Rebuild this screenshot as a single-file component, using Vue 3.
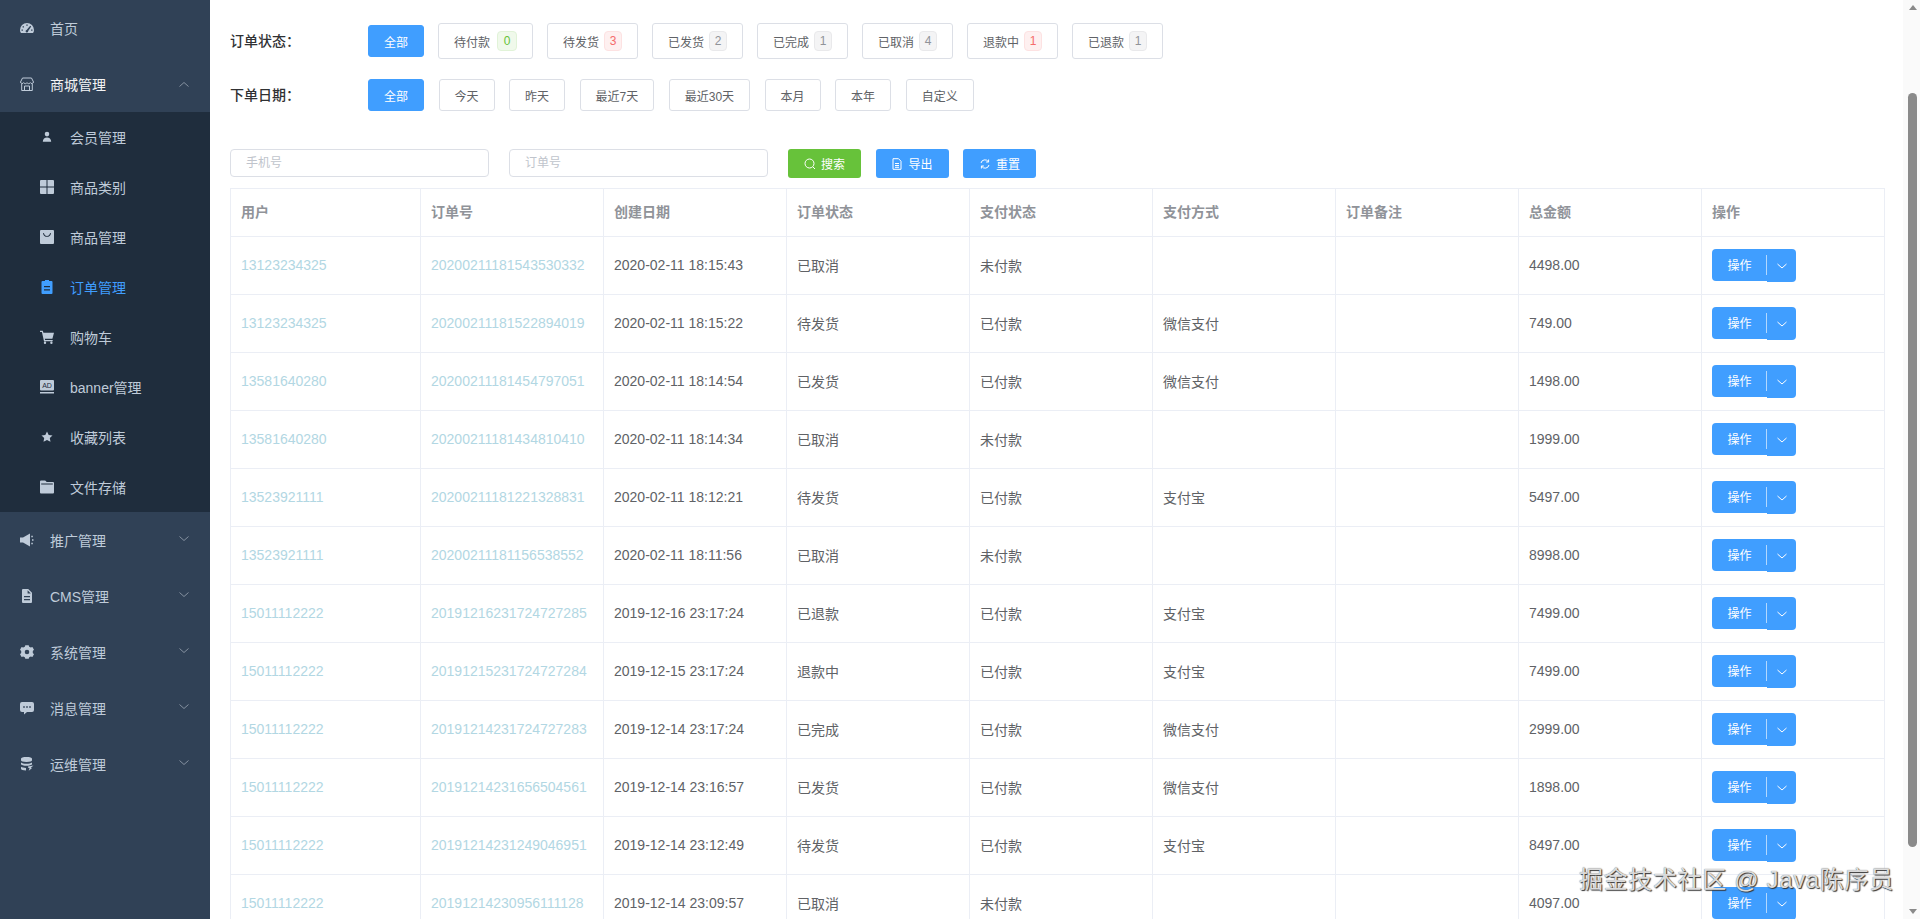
<script setup>
const P = {
  gauge: 'M7 2A7 7 0 0 0 0 9c0 1.3.3 2.3 1 3h12c.7-.7 1-1.7 1-3a7 7 0 0 0-7-7zM6.3 3.4h1.4v1.4H6.3zM2.6 5.2h1.4v1.4H2.6zM1.5 8.4h1.4v1.4H1.5zM11.1 8.4h1.4v1.4h-1.4zM10.2 4.8l1 .8-3 4.4a1.3 1.3 0 1 1-1.6-1.1z',
  shop: 'M2.5 1h9L13.5 5a1.7 1.7 0 0 1-3.2.6A1.8 1.8 0 0 1 7 5.6a1.8 1.8 0 0 1-3.3 0A1.7 1.7 0 0 1 .5 5zM1.7 7v6.5h10.6V7M4.5 13.5V9h5v4.5',
  user: 'M7 1.800a2.300 2.300 0 1 1 0 4.600 2.300 2.300 0 0 1 0-4.600zM2.800 11.800c0-2.800 1.900-4.300 4.200-4.300s4.200 1.500 4.200 4.300z',
  grid: 'M1 0h5.500v6.500H0V1a1 1 0 0 1 1-1zM7.500 0H13a1 1 0 0 1 1 1v5.500H7.500zM0 7.500h6.500V14H1a1 1 0 0 1-1-1zM7.500 7.500H14V13a1 1 0 0 1-1 1H7.500z',
  bag: 'M1 0h12a1 1 0 0 1 1 1v12a1 1 0 0 1-1 1H1a1 1 0 0 1-1-1V1a1 1 0 0 1 1-1zM3 3.200c.5 2.600 2 3.600 4 3.600s3.500-1 4-3.600l-.9-.1c-.4 2-1.500 2.800-3.100 2.800s-2.700-.8-3.100-2.800z',
  clip: 'M5 0h4v1h2.500a1 1 0 0 1 1 1v11a1 1 0 0 1-1 1h-9a1 1 0 0 1-1-1V2a1 1 0 0 1 1-1H5zM4 6v1.200h6V6zM4 9.200v1.200h6V9.200z',
  cart: 'M0 .8h2.800l.6 2H14l-1.600 6H4.800l.3 1.200h7.600v1.200H4L1.900 2H0zM5 11.600a1.200 1.200 0 1 1 0 2.400 1.200 1.200 0 0 1 0-2.400zM11.400 11.600a1.200 1.200 0 1 1 0 2.400 1.200 1.200 0 0 1 0-2.400z',
  star: 'M7 1.500l1.700 3.400 3.800.5-2.700 2.600.7 3.800L7 10l-3.500 1.800.7-3.800-2.700-2.600 3.800-.5z',
  folder: 'M1 .5h4.200L6.700 2H13a1 1 0 0 1 1 1v9.500a1 1 0 0 1-1 1H1a1 1 0 0 1-1-1v-11a1 1 0 0 1 1-1zM1.200 3.600v.9h11.600v-.9z',
  horn: 'M0 4.500h3L10 .5v13l-7-4H0zM11.300 2.800h1.500v1.400h-1.500zM12 6.300h1.500v1.400H12zM11.300 9.800h1.500v1.400h-1.500z',
  doc: 'M3 0h5.200L12 3.800V13a1 1 0 0 1-1 1H3a1 1 0 0 1-1-1V1a1 1 0 0 1 1-1zM7.600 1.200v3.200h3.200zM4 7v1.200h6V7zM4 10v1.200h6V10z',
  gear: 'M5.300.2H8.700L9.200 1.700 10.800 2.500 12.400 2.100 14 4.800 12.800 6V8L14 9.200 12.400 11.900 10.800 11.500 9.200 12.300 8.700 13.800H5.300L4.800 12.300 3.200 11.500 1.600 11.900 0 9.200 1.200 8V6L0 4.800 1.600 2.100 3.200 2.500 4.800 1.700zM7 4.700a2.300 2.300 0 1 0 0 4.600 2.300 2.300 0 0 0 0-4.600z',
  chat: 'M2 1h10a2 2 0 0 1 2 2v6a2 2 0 0 1-2 2H7l-3 2.500V11H2a2 2 0 0 1-2-2V3a2 2 0 0 1 2-2zM3.200 5.200v1.600h1.600V5.200zM6.200 5.200v1.600h1.600V5.200zM9.200 5.200v1.600h1.600V5.200z',
  db: 'M1 1.800C1 .6 3 0 6.500 0S12 .6 12 1.800v1.400c0 1.100-2 1.700-5.500 1.700S1 4.300 1 3.200zM1 5.500c1 .9 3 1.300 5.500 1.300s4.500-.4 5.500-1.300v1.700c0 .7-3 1.600-5.500 1.600S1 7.900 1 7.200zM1 9.800c1 .8 3 1.100 5 1.100v2.600c-3 0-5-.6-5-1.700zM8 9.500l5.500-1.100-2.600 2.400 1 .5-3.200 2.500.9-2.500-1.400-.5z'
}

const subMenu = [
  { label: '会员管理', icon: 'user' },
  { label: '商品类别', icon: 'grid' },
  { label: '商品管理', icon: 'bag' },
  { label: '订单管理', icon: 'clip', active: true },
  { label: '购物车', icon: 'cart' },
  { label: 'banner管理', icon: 'ad' },
  { label: '收藏列表', icon: 'star' },
  { label: '文件存储', icon: 'folder' }
]
const bottomMenu = [
  { label: '推广管理', icon: 'horn' },
  { label: 'CMS管理', icon: 'doc' },
  { label: '系统管理', icon: 'gear' },
  { label: '消息管理', icon: 'chat' },
  { label: '运维管理', icon: 'db' }
]
const statusTabs = [
  { label: '待付款', n: 0, tone: 'success', roomy: true },
  { label: '待发货', n: 3, tone: 'danger' },
  { label: '已发货', n: 2, tone: 'info' },
  { label: '已完成', n: 1, tone: 'info' },
  { label: '已取消', n: 4, tone: 'info' },
  { label: '退款中', n: 1, tone: 'danger' },
  { label: '已退款', n: 1, tone: 'info' }
]
const dateTabs = ['今天', '昨天', '最近7天', '最近30天', '本月', '本年', '自定义']
const headers = ['用户', '订单号', '创建日期', '订单状态', '支付状态', '支付方式', '订单备注', '总金额', '操作']
const colWidths = [190, 183, 183, 183, 183, 183, 183, 183, 183]
const rows = [
  ['13123234325', '20200211181543530332', '2020-02-11 18:15:43', '已取消', '未付款', '', '4498.00'],
  ['13123234325', '20200211181522894019', '2020-02-11 18:15:22', '待发货', '已付款', '微信支付', '749.00'],
  ['13581640280', '20200211181454797051', '2020-02-11 18:14:54', '已发货', '已付款', '微信支付', '1498.00'],
  ['13581640280', '20200211181434810410', '2020-02-11 18:14:34', '已取消', '未付款', '', '1999.00'],
  ['13523921111', '20200211181221328831', '2020-02-11 18:12:21', '待发货', '已付款', '支付宝', '5497.00'],
  ['13523921111', '20200211181156538552', '2020-02-11 18:11:56', '已取消', '未付款', '', '8998.00'],
  ['15011112222', '20191216231724727285', '2019-12-16 23:17:24', '已退款', '已付款', '支付宝', '7499.00'],
  ['15011112222', '20191215231724727284', '2019-12-15 23:17:24', '退款中', '已付款', '支付宝', '7499.00'],
  ['15011112222', '20191214231724727283', '2019-12-14 23:17:24', '已完成', '已付款', '微信支付', '2999.00'],
  ['15011112222', '20191214231656504561', '2019-12-14 23:16:57', '已发货', '已付款', '微信支付', '1898.00'],
  ['15011112222', '20191214231249046951', '2019-12-14 23:12:49', '待发货', '已付款', '支付宝', '8497.00'],
  ['15011112222', '20191214230956111128', '2019-12-14 23:09:57', '已取消', '未付款', '', '4097.00']
].map(r => ({ user: r[0], no: r[1], date: r[2], status: r[3], pay: r[4], method: r[5], total: r[6] }))
</script>

<template>
  <div class="app">
    <aside class="side">
      <div class="m1">
        <svg class="ic" viewBox="0 0 14 14"><path :d="P.gauge" fill-rule="evenodd" /></svg>
        <span>首页</span>
      </div>
      <div class="m1 open">
        <svg class="ic outline" viewBox="0 0 14 14"><path :d="P.shop" /></svg>
        <span>商城管理</span>
        <svg class="chev up" viewBox="0 0 12 12"><path d="M1.500 3.500 6 7.500l4.500-4" /></svg>
      </div>
      <div class="sub">
        <div v-for="s in subMenu" :key="s.label" class="m2" :class="{ on: s.active }">
          <svg v-if="s.icon === 'ad'" class="ic" viewBox="0 0 14 14">
            <rect x="0" y="0" width="14" height="10.500" rx="1" />
            <text x="7" y="8.200" text-anchor="middle" class="adtxt">AD</text>
            <rect x="0" y="12" width="14" height="1.500" />
          </svg>
          <svg v-else class="ic" viewBox="0 0 14 14"><path :d="P[s.icon]" fill-rule="evenodd" /></svg>
          <span>{{ s.label }}</span>
        </div>
      </div>
      <div v-for="b in bottomMenu" :key="b.label" class="m1">
        <svg class="ic" viewBox="0 0 14 14"><path :d="P[b.icon]" fill-rule="evenodd" /></svg>
        <span>{{ b.label }}</span>
        <svg class="chev" viewBox="0 0 12 12"><path d="M1.500 3.500 6 7.500l4.500-4" /></svg>
      </div>
    </aside>

    <main class="main">
      <div class="filter first">
        <div class="flabel">订单状态：</div>
        <div class="fbtns tight">
          <button class="btn primary">全部</button>
          <button v-for="t in statusTabs" :key="t.label" class="btn tall" :class="{ roomy: t.roomy }">
            {{ t.label }}<span class="tag" :class="t.tone">{{ t.n }}</span>
          </button>
        </div>
      </div>
      <div class="filter">
        <div class="flabel">下单日期：</div>
        <div class="fbtns">
          <button class="btn primary">全部</button>
          <button v-for="d in dateTabs" :key="d" class="btn">{{ d }}</button>
        </div>
      </div>

      <div class="search">
        <input class="inp" placeholder="手机号" />
        <input class="inp" placeholder="订单号" />
        <button class="mini success">
          <svg viewBox="0 0 12 12"><circle cx="5.500" cy="5.500" r="4.500" /><path d="M9 9l2 2" /></svg>搜索
        </button>
        <button class="mini primary">
          <svg viewBox="0 0 12 12"><path d="M2 .7h5.500L10 3.200v8.100H2zM4 5.500h4M4 7.500h4M4 9.300h4" /></svg>导出
        </button>
        <button class="mini primary">
          <svg viewBox="0 0 12 12"><path d="M2 5A4 4 0 0 1 9.300 3.700M10 7A4 4 0 0 1 2.700 8.300M9.600 1.500v2.500H7.100M2.400 10.500V8h2.500" /></svg>重置
        </button>
      </div>

      <table class="tbl">
        <colgroup><col v-for="(w, i) in colWidths" :key="i" :style="{ width: w + 'px' }" /></colgroup>
        <thead>
          <tr><th v-for="h in headers" :key="h">{{ h }}</th></tr>
        </thead>
        <tbody>
          <tr v-for="r in rows" :key="r.no">
            <td class="lnk">{{ r.user }}</td>
            <td class="lnk">{{ r.no }}</td>
            <td>{{ r.date }}</td>
            <td>{{ r.status }}</td>
            <td>{{ r.pay }}</td>
            <td>{{ r.method }}</td>
            <td></td>
            <td>{{ r.total }}</td>
            <td class="act">
              <div class="drop">
                <span class="dmain">操作</span>
                <span class="dcaret">
                  <svg viewBox="0 0 12 12"><path d="M1.500 4 6 8l4.500-4" /></svg>
                </span>
              </div>
            </td>
          </tr>
        </tbody>
      </table>
    </main>

    <div class="scroll">
      <span class="arrow"></span>
      <div class="track"><div class="thumb"></div></div>
      <span class="arrow down"></span>
    </div>

    <div class="mark">掘金技术社区 @ Java陈序员</div>
  </div>
</template>

<style>
html, body { margin: 0; overflow: hidden; background: #fff; }
</style>

<style scoped>
.app {
  position: relative;
  display: flex;
  height: 919px;
  overflow: hidden;
  font-family: "Liberation Sans", "Noto Sans CJK SC", sans-serif;
  font-size: 14px;
  color: #606266;
}
.side {
  flex: 0 0 210px;
  background: #304156;
  color: #bfcbd9;
}
.m1, .m2 { display: flex; align-items: center; }
.m1 { height: 56px; padding-left: 20px; position: relative; }
.m1 span { margin-left: 16px; }
.m1.open { color: #f4f4f5; }
.m1.open .ic { color: #bfcbd9; }
.sub { background: #1f2d3d; }
.m2 { height: 50px; padding-left: 40px; }
.m2 span { margin-left: 16px; padding-bottom: 1px; }
.m2.on { color: #409eff; }
.ic { width: 14px; height: 14px; flex: none; fill: currentColor; }
.ic.outline { fill: none; stroke: currentColor; stroke-width: 1; }
.adtxt {
  font-family: "Liberation Sans", sans-serif;
  font-size: 7px;
  fill: #1f2d3d;
}
.chev {
  position: absolute;
  left: 178px;
  top: 21px;
  width: 12px;
  height: 12px;
  fill: none;
  stroke: #8591a0;
  stroke-width: 1;
}
.chev.up { transform: translateY(1px) rotate(180deg); }

.main {
  flex: 1;
  min-width: 0;
  padding: 23px 18px 0 20px;
  overflow: hidden;
}
.filter { display: flex; align-items: center; margin-bottom: 20px; }
.filter.first { height: 36px; }
.filter:not(.first) { margin-bottom: 38px; height: 32px; }
.flabel { flex: 0 0 138px; color: #303133; font-weight: 500; font-size: 14px; padding-bottom: 2px; box-sizing: border-box; }
.fbtns { display: flex; align-items: center; gap: 14.500px; }
.fbtns.tight { gap: 14px; }
.btn {
  box-sizing: border-box;
  height: 32px;
  padding: 0 15px;
  display: inline-flex;
  align-items: center;
  border: 1px solid #dcdfe6;
  border-radius: 3px;
  background: #fff;
  color: #606266;
  font: inherit;
  font-size: 12px;
  white-space: nowrap;
}
.btn.primary { background: #409eff; border-color: #409eff; color: #fff; }
.btn.tall { height: 36px; }
.tag {
  box-sizing: border-box;
  display: inline-block;
  height: 20px;
  line-height: 18px;
  width: 18px;
  text-align: center;
  margin-left: 5px;
  border: 1px solid;
  border-radius: 4px;
  font-size: 12px;
}
.btn.roomy .tag { margin-left: 7px; width: 20px; }
.tag.success { background: #f0f9eb; border-color: #e1f3d8; color: #67c23a; }
.tag.danger { background: #fef0f0; border-color: #fde2e2; color: #f56c6c; }
.tag.info { background: #f4f4f5; border-color: #e9e9eb; color: #909399; }

.search { display: flex; align-items: flex-start; margin-bottom: 10px; }
.inp {
  box-sizing: border-box;
  width: 259px;
  height: 28px;
  padding: 0 15px;
  margin-right: 20px;
  border: 1px solid #dcdfe6;
  border-radius: 4px;
  font: inherit;
  font-size: 12px;
  outline: none;
  color: #606266;
}
.inp::placeholder { color: #c0c4cc; }
.mini {
  box-sizing: border-box;
  width: 73px;
  height: 29px;
  margin-right: 14.500px;
  display: inline-flex;
  align-items: center;
  justify-content: center;
  gap: 5px;
  border: none;
  border-radius: 3px;
  color: #fff;
  font: inherit;
  font-size: 12px;
}
.mini svg { width: 12px; height: 12px; fill: none; stroke: #fff; stroke-width: 1; }
.mini.success { background: #67c23a; }
.mini.primary { background: #409eff; }

.tbl {
  width: 1654px;
  table-layout: fixed;
  border-collapse: separate;
  border-spacing: 0;
  border-top: 1px solid #ebeef5;
  border-left: 1px solid #ebeef5;
}
.tbl th, .tbl td {
  box-sizing: border-box;
  padding: 0 10px 2px;
  text-align: left;
  border-right: 1px solid #ebeef5;
  border-bottom: 1px solid #ebeef5;
  white-space: nowrap;
  overflow: hidden;
}
.tbl th { height: 48px; padding-bottom: 4px; color: #909399; font-weight: 700; font-size: 14px; }
.tbl td { height: 58px; }
.tbl td.act { padding-bottom: 0; }
.tbl td.lnk { color: #b2d7e3; }
.drop { display: flex; align-items: flex-start; width: 84px; }
.dmain {
  width: 55px;
  height: 32px;
  line-height: 34px;
  text-align: center;
  background: #409eff;
  color: #fff;
  font-size: 12px;
  border-radius: 4px 0 0 4px;
  position: relative;
}
.dmain::after {
  content: "";
  position: absolute;
  right: 0;
  top: 6px;
  bottom: 6px;
  width: 1px;
  background: rgba(255, 255, 255, 0.6);
}
.dcaret {
  width: 29px;
  height: 33px;
  display: flex;
  align-items: center;
  justify-content: center;
  background: #409eff;
  border-radius: 0 4px 4px 0;
}
.dcaret svg { width: 12px; height: 12px; fill: none; stroke: #fff; stroke-width: 1; }

.scroll {
  flex: 0 0 17px;
  box-sizing: border-box;
  padding: 0 3px 0 5px;
  display: flex;
  flex-direction: column;
  align-items: center;
  background: #fafafa;
}
.arrow {
  flex: none;
  width: 0;
  height: 0;
  margin: 5px 0;
  border-left: 4.500px solid transparent;
  border-right: 4.500px solid transparent;
  border-bottom: 5px solid #8a8a8a;
}
.arrow.down { border-bottom: none; border-top: 5px solid #8a8a8a; }
.track { flex: 1; width: 9px; padding-top: 78px; }
.thumb { width: 9px; height: 754px; background: #8a8a8a; border-radius: 5px; }

.mark {
  position: absolute;
  left: 1579px;
  top: 863px;
  font-size: 24px;
  letter-spacing: 0.650px;
  line-height: 34px;
  white-space: nowrap;
  color: rgba(240, 240, 240, 0.9);
  text-shadow: 1px 1px 1px #333, 0 0 1px #555;
}
</style>
